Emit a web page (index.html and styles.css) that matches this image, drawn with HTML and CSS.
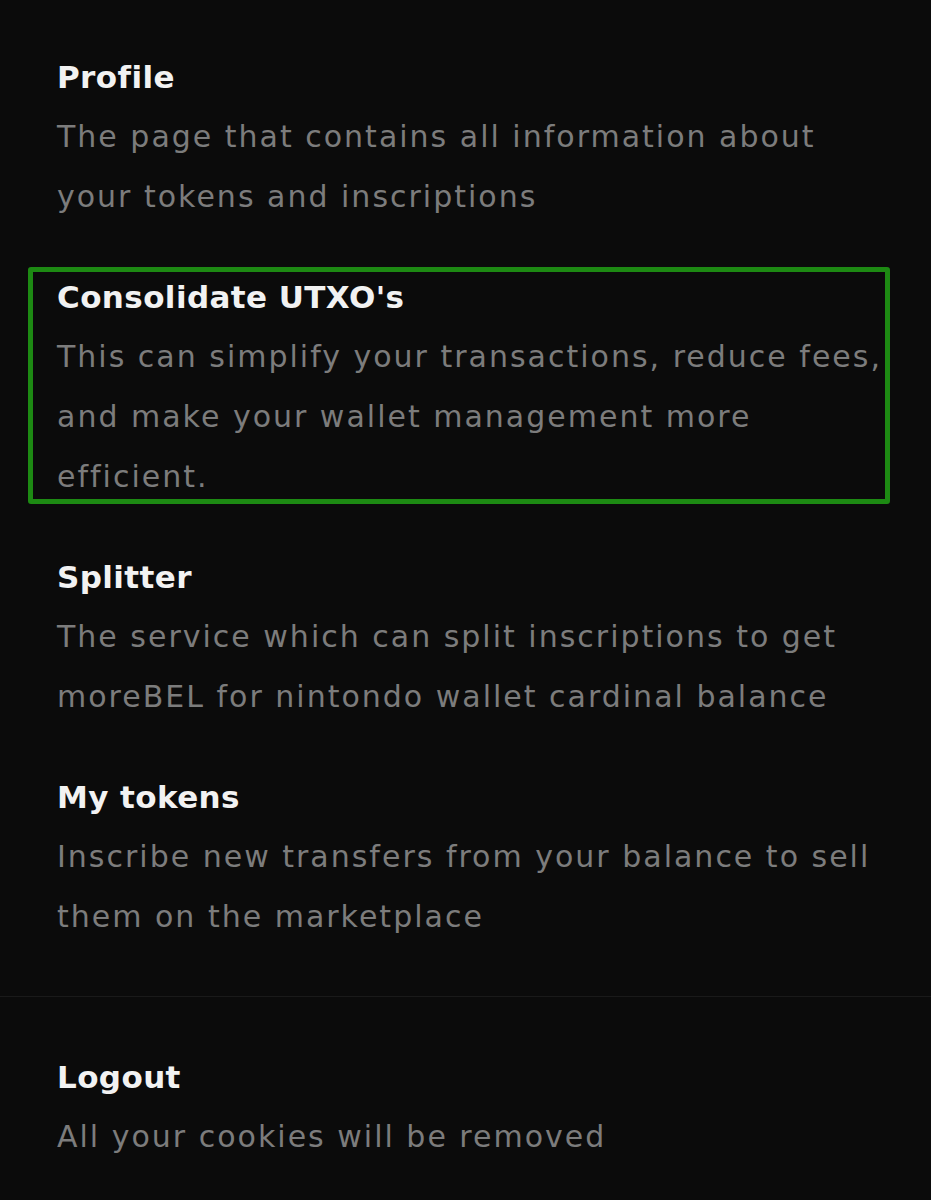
FILE: index.html
```html
<!DOCTYPE html>
<html lang="en">
<head>
<meta charset="utf-8">
<title>Menu</title>
<link rel="stylesheet" href="styles.css">
</head>
<body>
<main class="menu">
  <ul class="menu-list">
    <li class="item">
      <div class="item-title">Profile</div>
      <p class="item-desc">The page that contains all information about your tokens and inscriptions</p>
    </li>
    <li class="item item-highlight">
      <div class="item-title">Consolidate UTXO's</div>
      <p class="item-desc">This can simplify your transactions, reduce fees, and make your wallet management more efficient.</p>
    </li>
    <li class="item">
      <div class="item-title">Splitter</div>
      <p class="item-desc">The service which can split inscriptions to get moreBEL for nintondo wallet cardinal balance</p>
    </li>
    <li class="item">
      <div class="item-title">My tokens</div>
      <p class="item-desc">Inscribe new transfers from your balance to sell them on the marketplace</p>
    </li>
  </ul>
  <section class="logout">
    <div class="item">
      <div class="item-title">Logout</div>
      <p class="item-desc">All your cookies will be removed</p>
    </div>
  </section>
</main>
</body>
</html>
```
FILE: styles.css
```css
html, body {
  margin: 0;
  padding: 0;
  background: #0b0b0b;
}

body {
  font-family: "DejaVu Sans", "Open Sans", sans-serif;
  color: #f2f2f2;
}

.menu {
  min-height: 1200px;
}

.menu-list {
  list-style: none;
  margin: 0;
  padding: 47px 0 49px;
  display: flex;
  flex-direction: column;
  gap: 40px;
  border-bottom: 1px solid #1a1a1a;
}

.item {
  position: relative;
  padding: 0 41px 0 57px;
}

.item-title {
  font-size: 31px;
  font-weight: 700;
  line-height: 60px;
  letter-spacing: 0.4px;
  color: #f2f2f2;
}

.item-desc {
  margin: 0;
  font-size: 30px;
  font-weight: 400;
  line-height: 60px;
  letter-spacing: 2px;
  color: #7c7c7c;
}

.item-highlight::after {
  content: "";
  position: absolute;
  left: 28px;
  right: 41px;
  top: 0;
  bottom: 3px;
  border: 5px solid #1d8a13;
  border-radius: 3px;
  pointer-events: none;
}

.logout {
  padding-top: 50px;
}
```
